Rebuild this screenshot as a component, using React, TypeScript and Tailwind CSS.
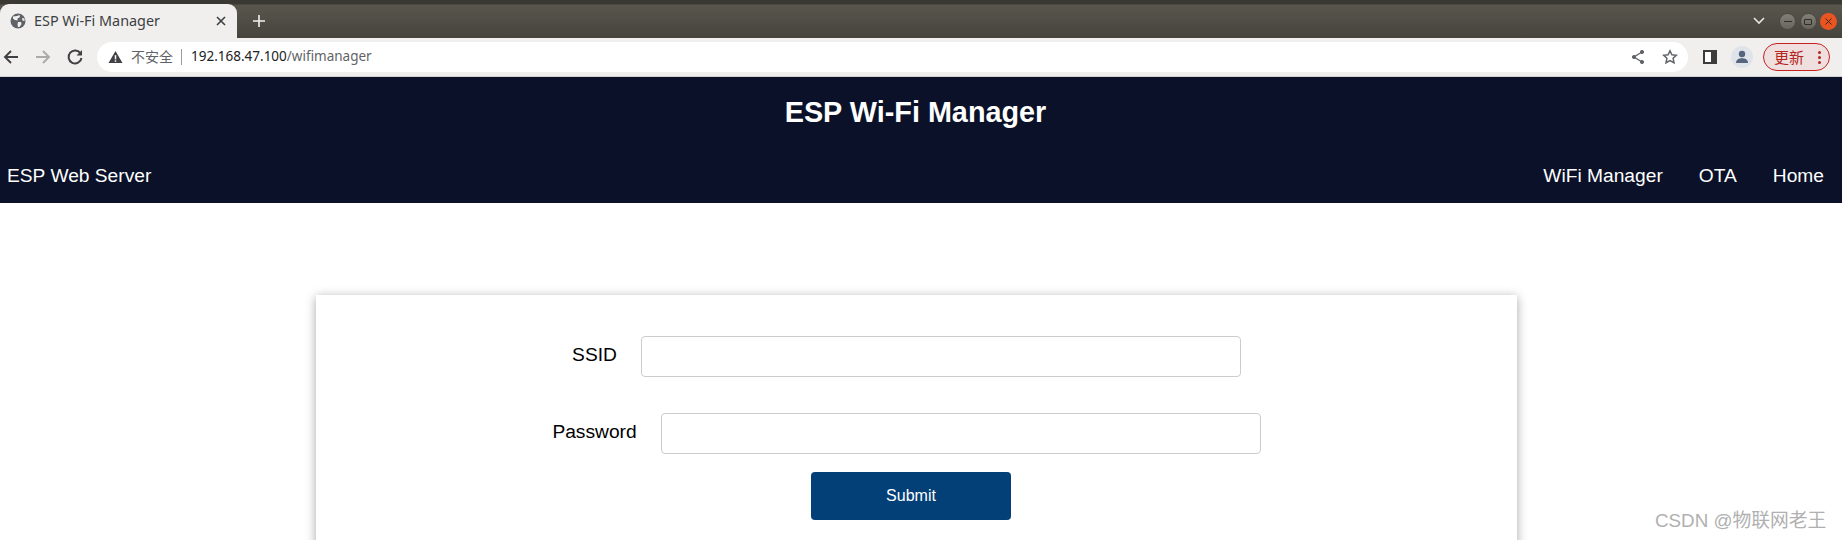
import React from "react";

const ui = { fontFamily: '"Noto Sans", "Noto Sans CJK SC", sans-serif' };

function Globe() {
  return (
    <svg width="16" height="16" viewBox="0 0 16 16" className="shrink-0">
      <circle cx="8" cy="8" r="7.5" fill="#5f6368" />
      <path d="M3 3.5 L7 3 L9.5 2 L10 4 L7.5 5.5 L7.5 7.5 L4.8 7 L3 5.5 Z M8 9 L11 9 L11.5 11 L9.5 14 L8 14 L7.5 11.5 Z M12 5 L14.5 5.5 L14.5 8 L12.5 7.5 Z" fill="#f1f0ee" />
    </svg>
  );
}

function Toolbar() {
  return (
    <div className="flex h-[38px] items-center bg-[#f0efed]" style={ui}>
      <svg width="18" height="18" viewBox="0 0 18 18" className="ml-[2px] shrink-0" fill="none" stroke="#404144" strokeWidth="1.9">
        <path d="M16 9H3M9 3L3 9l6 6" />
      </svg>
      <svg width="18" height="18" viewBox="0 0 18 18" className="ml-[14px] shrink-0" fill="none" stroke="#aaaaaa" strokeWidth="1.9">
        <path d="M2 9h13M9 3l6 6-6 6" />
      </svg>
      <svg width="18" height="18" viewBox="0 0 18 18" className="ml-[14px] shrink-0" fill="none" stroke="#404144" strokeWidth="2">
        <path d="M14.6 5.5A6.5 6.5 0 1 0 15.5 10" />
        <path d="M16 2v5.5h-5.5z" fill="#404144" stroke="none" />
      </svg>
      <div className="ml-[13px] flex h-[30px] flex-1 items-center rounded-full bg-white pl-[11px]">
        <svg width="15" height="14" viewBox="0 0 16 15" className="shrink-0">
          <path d="M8 1L15.5 14H.5z" fill="#404144" />
          <rect x="7.2" y="5.5" width="1.6" height="4.5" fill="#fff" />
          <rect x="7.2" y="11" width="1.6" height="1.6" fill="#fff" />
        </svg>
        <span className="ml-[8px] text-[14px] leading-none text-[#5f6368]">不安全</span>
        <span className="ml-[8px] h-[16px] w-px bg-[#9a9a9a]" />
        <span className="ml-[9px] text-[13.5px] leading-none text-[#202124]">
          192.168.47.100<span className="text-[#5f6368]">/wifimanager</span>
        </span>
        <div className="flex-1" />
        <svg width="16" height="16" viewBox="0 0 16 16" className="mr-[16px] shrink-0" fill="#606368" stroke="#606368">
          <path d="M12 3L4 8l8 5" fill="none" strokeWidth="1.4" />
          <circle cx="12" cy="3" r="1.6" />
          <circle cx="4" cy="8" r="1.6" />
          <circle cx="12" cy="13" r="1.6" />
        </svg>
        <svg width="16" height="16" viewBox="0 0 16 16" className="mr-[10px] shrink-0" fill="none" stroke="#606368" strokeWidth="1.5">
          <path d="M8 1.8l1.9 4 4.4.5-3.2 3 .9 4.4L8 11.5l-4 2.2.9-4.4-3.2-3 4.4-.5z" />
        </svg>
      </div>
      <div className="ml-[15px] flex h-[14px] w-[14px] shrink-0 justify-end border-[2px] border-[#3c3c3c] bg-white">
        <div className="h-full w-[4px] bg-[#3c3c3c]" />
      </div>
      <div className="ml-[14px] flex h-[22px] w-[22px] shrink-0 items-center justify-center overflow-hidden rounded-full bg-[#dfe3ea]">
        <svg width="14" height="14" viewBox="0 0 14 14" fill="#55657e">
          <circle cx="7" cy="4" r="3.2" />
          <path d="M1 13c0-3.5 3-4.8 6-4.8s6 1.3 6 4.8z" />
        </svg>
      </div>
      <div className="ml-[10px] mr-[12px] flex h-[28px] w-[67px] shrink-0 items-center rounded-full border border-[#c5221f] bg-[#f0dfdf] pl-[10px] text-[15px] leading-none text-[#b3261e]">
        <span>更新</span>
        <div className="ml-[14px] flex flex-col gap-[2px]">
          <span className="h-[3px] w-[3px] rounded-full bg-[#b3261e]" />
          <span className="h-[3px] w-[3px] rounded-full bg-[#b3261e]" />
          <span className="h-[3px] w-[3px] rounded-full bg-[#b3261e]" />
        </div>
      </div>
    </div>
  );
}

function TitleBar() {
  return (
    <div className="flex h-[38px] bg-[linear-gradient(#3a3833_0,#3a3833_4px,#59564d_5px,#45433c_100%)] pt-[4px]" style={ui}>
      <div className="flex h-[34px] w-[237px] items-center rounded-t-[9px] bg-[#f0efed] pl-[10px] pr-[11px]">
        <Globe />
        <span className="ml-[8px] flex-1 pt-[1px] text-[14.4px] leading-none text-[#3c4043]">ESP Wi-Fi Manager</span>
        <svg width="10" height="10" viewBox="0 0 10 10" fill="none" stroke="#3c4043" strokeWidth="1.6">
          <path d="M1 1l8 8M9 1l-8 8" />
        </svg>
      </div>
      <svg width="12" height="12" viewBox="0 0 12 12" className="ml-[16px] mt-[11px]" fill="none" stroke="#f1f0ee" strokeWidth="1.6">
        <path d="M6 0v12M0 6h12" />
      </svg>
      <div className="flex-1" />
      <svg width="12" height="8" viewBox="0 0 12 8" className="mr-[14px] mt-[13px]" fill="none" stroke="#e8e6e0" strokeWidth="1.6">
        <path d="M1 1l5 5 5-5" />
      </svg>
      <div className="mr-[5px] mt-[9px] flex gap-[3.5px]">
        <div className="flex h-[17px] w-[17px] items-center justify-center rounded-full border border-[#4a4840] bg-gradient-to-b from-[#827f77] to-[#68655d]">
          <div className="h-px w-[8px] bg-[#2f2d29]" />
        </div>
        <div className="flex h-[17px] w-[17px] items-center justify-center rounded-full border border-[#4a4840] bg-gradient-to-b from-[#827f77] to-[#68655d]">
          <div className="h-[6px] w-[8px] rounded-[1px] border border-[#2f2d29]" />
        </div>
        <div className="flex h-[17px] w-[17px] items-center justify-center rounded-full bg-[#e95420]">
          <svg width="7" height="7" viewBox="0 0 7 7" fill="none" stroke="#3f2416" strokeWidth="1">
            <path d="M.5.5l6 6M6.5.5l-6 6" />
          </svg>
        </div>
      </div>
    </div>
  );
}

function Field({ label, className }: { label: string; className: string }) {
  return (
    <div className={`flex items-center justify-center pr-[20px] ${className}`}>
      <label className="mb-[3px] mr-[24px] text-[19.2px] leading-[22px] text-black">{label}</label>
      <input type="text" className="h-[41px] w-[600px] rounded-[4px] border border-[#cccccc] bg-white" />
    </div>
  );
}

export default function App() {
  return (
    <div className="relative h-[540px] w-[1842px] overflow-hidden bg-white" style={{ fontFamily: '"Liberation Sans", Arial, sans-serif' }}>
      <TitleBar />
      <Toolbar />
      <header className="border-t border-[#d0d0d0] bg-[#0a1128] text-white">
        <h1 className="pt-[19px] pr-[11px] text-center text-[28.8px] font-bold leading-[33px]">ESP Wi-Fi Manager</h1>
        <nav className="flex h-[74px] items-center justify-between pl-[7px] pr-[18px] pt-[20px] text-[19.2px]">
          <span>ESP Web Server</span>
          <div className="flex gap-[36px]">
            <span>WiFi Manager</span>
            <span>OTA</span>
            <span>Home</span>
          </div>
        </nav>
      </header>
      <main className="mx-[316px] mt-[92px] h-[300px] w-[1201px] bg-white pt-[41px] shadow-[0_2px_10px_0_rgba(0,0,0,0.35)]">
        <Field label="SSID" className="" />
        <Field label="Password" className="mt-[36px]" />
        <div className="mt-[18px] flex justify-center pr-[11px]">
          <button className="h-[48px] w-[200px] rounded-[4px] bg-[#034078] text-[16px] text-white">Submit</button>
        </div>
      </main>
      <span className="absolute left-[1655px] top-[510px] text-[18.8px] leading-[22px] text-[#b0b0b0]" style={{ fontFamily: '"Liberation Sans", "Noto Sans CJK SC", sans-serif' }}>
        CSDN @物联网老王
      </span>
    </div>
  );
}
